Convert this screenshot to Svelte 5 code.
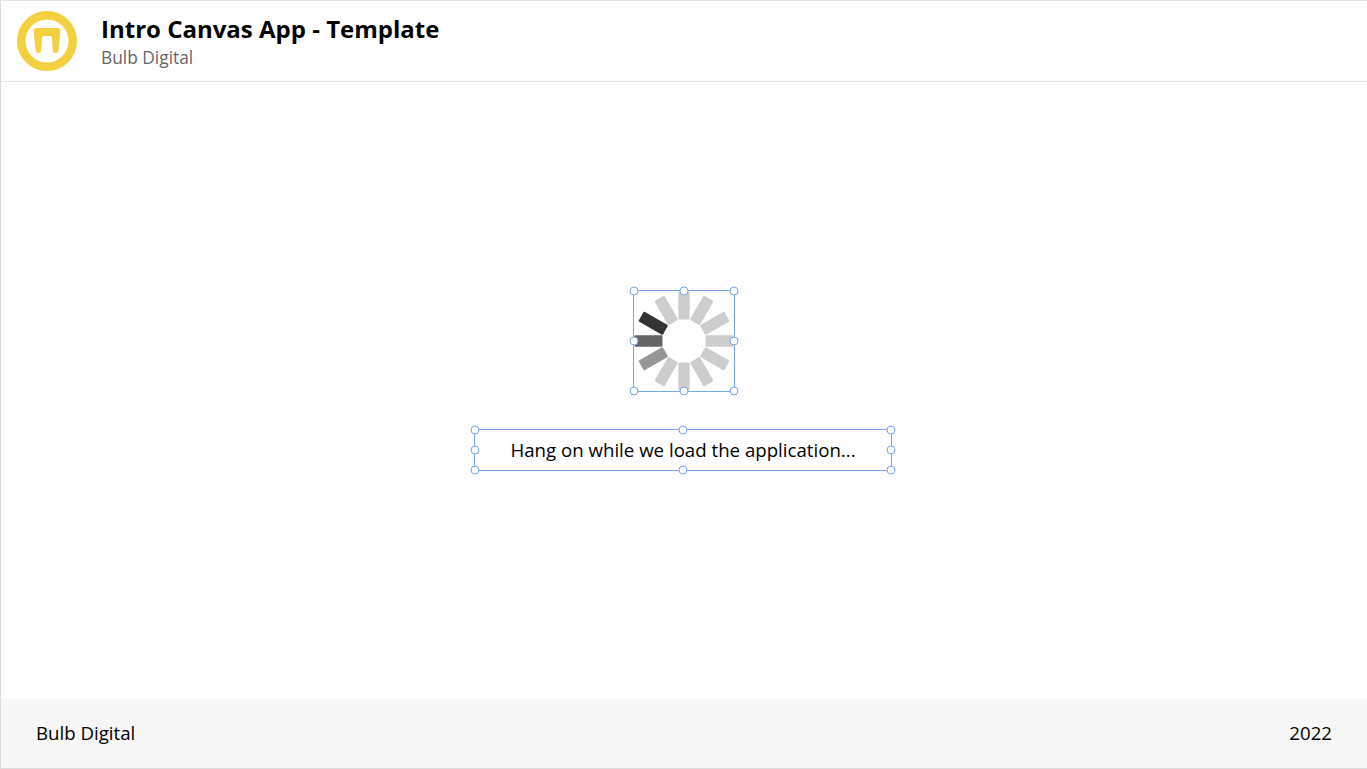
<script>
  const spokes = [0, 30, 60, 90, 120, 150, 180, 210, 240, 270, 300, 330];
  const shade = { 240: '#969696', 270: '#646464', 300: '#333333' };
  const handles = ['tl', 'tc', 'tr', 'ml', 'mr', 'bl', 'bc', 'br'];
</script>

<div class="page">
  <header class="header">
    <svg class="logo" viewBox="0 0 60 60" aria-hidden="true">
      <circle cx="30" cy="30" r="25.75" fill="none" stroke="#f4d03f" stroke-width="8.5" />
      <path d="M19.5 17 H40.5 Q43.5 17 43.3 20.5 L41.5 39 Q41 42 38.5 42 Q36 42 35.8 39 L35 27 Q34.8 25 33 25 H27 Q25.2 25 25 27 L24.2 39 Q24 42 21.5 42 Q19 42 18.5 39 L16.7 20.5 Q16.5 17 19.5 17 Z" fill="#f4d03f" />
    </svg>
    <div class="titles">
      <h1>Intro Canvas App - Template</h1>
      <p>Bulb Digital</p>
    </div>
  </header>

  <main class="main">
    <div class="selected spinner">
      <svg viewBox="0 0 100 100" aria-hidden="true">
        {#each spokes as a}
          <rect x="44.3" y="0.5" width="11.4" height="28" rx="1.2" fill={shade[a] ?? '#cdcdcd'} transform="rotate({a} 50 50)" />
        {/each}
      </svg>
      {#each handles as h}<span class="handle {h}"></span>{/each}
    </div>
    <div class="selected message">
      Hang on while we load the application...
      {#each handles as h}<span class="handle {h}"></span>{/each}
    </div>
  </main>

  <footer class="footer">
    <span>Bulb Digital</span>
    <span>2022</span>
  </footer>
</div>

<style>
  :global(body) {
    margin: 0;
    background: #fff;
  }
  .page {
    box-sizing: border-box;
    width: 1367px;
    height: 769px;
    display: flex;
    flex-direction: column;
    border-top: 1px solid #e4e4e4;
    border-left: 1px solid #dcdcdc;
    border-bottom: 1px solid #dcdcdc;
    font-family: "Open Sans", sans-serif;
    color: #000;
    overflow: hidden;
  }
  .header {
    box-sizing: border-box;
    height: 81px;
    flex: none;
    display: flex;
    align-items: center;
    padding-left: 16px;
    border-bottom: 1px solid #e6e6e6;
  }
  .logo {
    width: 60px;
    height: 60px;
    flex: none;
  }
  .titles {
    margin-left: 24px;
    padding-bottom: 1px;
  }
  h1 {
    margin: 0;
    font-size: 24px;
    line-height: 30px;
    font-weight: 700;
    color: #000;
  }
  .titles p {
    margin: 2px 0 0;
    font-size: 17.33px;
    line-height: 22px;
    color: #666;
  }
  .main {
    flex: 1;
    display: flex;
    flex-direction: column;
    align-items: center;
    justify-content: center;
    padding-bottom: 20px;
    gap: 39px;
  }
  .selected {
    position: relative;
    box-sizing: border-box;
    outline: 1.5px solid #74a7e6;
  }
  .spinner {
    width: 100px;
    height: 100px;
  }
  .spinner svg {
    display: block;
    width: 100px;
    height: 100px;
  }
  .message {
    width: 416px;
    height: 40px;
    margin-right: 2px;
    padding-bottom: 2px;
    display: flex;
    align-items: center;
    justify-content: center;
    font-size: 18.67px;
    color: #000;
  }
  .handle {
    position: absolute;
    box-sizing: border-box;
    width: 9px;
    height: 9px;
    border: 1.5px solid #74a7e6;
    border-radius: 50%;
    background: #fff;
    transform: translate(-50%, -50%);
  }
  .tl, .ml, .bl { left: 0; }
  .tc, .bc { left: 50%; }
  .tr, .mr, .br { left: 100%; }
  .tl, .tc, .tr { top: 0; }
  .ml, .mr { top: 50%; }
  .bl, .bc, .br { top: 100%; }
  .footer {
    box-sizing: border-box;
    height: 69px;
    flex: none;
    display: flex;
    align-items: center;
    justify-content: space-between;
    padding: 0 35px 2px 35px;
    background: #f7f7f7;
    font-size: 18.67px;
    color: #000;
  }
</style>
